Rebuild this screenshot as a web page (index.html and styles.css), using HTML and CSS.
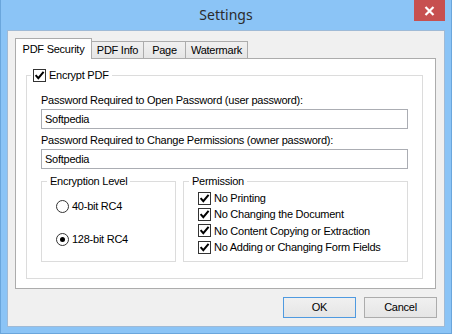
FILE: index.html
```html
<!DOCTYPE html>
<html>
<head>
<meta charset="utf-8">
<link rel="stylesheet" href="styles.css">
</head>
<body>
<div class="window">
  <div class="titlebar">
    <span class="title">Settings</span>
    <div class="close"><svg width="11" height="10" viewBox="0 0 11 10"><path d="M1.5 1 L9.5 9 M9.5 1 L1.5 9" stroke="#fff" stroke-width="2.2"/></svg></div>
  </div>
  <div class="client">
    <div class="tabs">
      <div class="tab active">PDF Security</div>
      <div class="tab t-info">PDF Info</div>
      <div class="tab t-page">Page</div>
      <div class="tab t-wm">Watermark</div>
    </div>
    <div class="panel">
      <div class="group main">
        <div class="gtitle"><span class="cb"><svg width="11" height="11" viewBox="0 0 11 11"><path d="M1.6 5.2 L4.3 8.2 L9.6 1.8" fill="none" stroke="#000" stroke-width="2"/></svg></span><span class="cbtext">Encrypt PDF</span></div>
        <div class="lbl l1">Password Required to Open Password (user password):</div>
        <div class="input">Softpedia</div>
        <div class="lbl l2">Password Required to Change Permissions (owner password):</div>
        <div class="input">Softpedia</div>
        <div class="subrow">
          <div class="group enc">
            <div class="gtitle plain">Encryption Level</div>
            <div class="radio r1"><span class="rb"></span><span>40-bit RC4</span></div>
            <div class="radio r2"><span class="rb on"><span class="dot"></span></span><span>128-bit RC4</span></div>
          </div>
          <div class="group perm">
            <div class="gtitle plain">Permission</div>
            <div class="chk first"><span class="cb"><svg width="11" height="11" viewBox="0 0 11 11"><path d="M1.6 5.2 L4.3 8.2 L9.6 1.8" fill="none" stroke="#000" stroke-width="2"/></svg></span><span>No Printing</span></div>
            <div class="chk"><span class="cb"><svg width="11" height="11" viewBox="0 0 11 11"><path d="M1.6 5.2 L4.3 8.2 L9.6 1.8" fill="none" stroke="#000" stroke-width="2"/></svg></span><span>No Changing the Document</span></div>
            <div class="chk"><span class="cb"><svg width="11" height="11" viewBox="0 0 11 11"><path d="M1.6 5.2 L4.3 8.2 L9.6 1.8" fill="none" stroke="#000" stroke-width="2"/></svg></span><span>No Content Copying or Extraction</span></div>
            <div class="chk"><span class="cb"><svg width="11" height="11" viewBox="0 0 11 11"><path d="M1.6 5.2 L4.3 8.2 L9.6 1.8" fill="none" stroke="#000" stroke-width="2"/></svg></span><span>No Adding or Changing Form Fields</span></div>
          </div>
        </div>
      </div>
    </div>
    <div class="buttons">
      <div class="btn default">OK</div>
      <div class="btn">Cancel</div>
    </div>
  </div>
</div>
</body>
</html>
```
FILE: styles.css
```css
* { box-sizing: border-box; margin: 0; padding: 0; }
html, body { width: 452px; height: 334px; overflow: hidden; }
body {
  font-family: "Liberation Sans", Arial, sans-serif;
  font-size: 11px;
  letter-spacing: -0.25px;
  color: #000;
}
.window {
  width: 452px;
  height: 334px;
  background: #8bc4f6;
  border: 1px solid #6aa6dc;
  border-top: none;
  display: flex;
  flex-direction: column;
}
.titlebar {
  height: 30px;
  display: grid;
  grid-template-columns: 1fr auto 1fr;
  align-items: start;
}
.title {
  grid-column: 2;
  font-family: "Noto Sans", sans-serif;
  font-size: 14px;
  letter-spacing: 0;
  line-height: 30px;
  color: #2b2b2b;
}
.close {
  grid-column: 3;
  justify-self: end;
  width: 31px;
  height: 21px;
  margin-right: 6px;
  background: #c75050;
  display: flex;
  align-items: center;
  justify-content: center;
}
.client {
  margin: 0 6px;
  height: 297px;
  background: #f0f0f0;
  border: 1px solid #9fbad6;
  padding: 7px 8px 0 7px;
  display: flex;
  flex-direction: column;
}
.tabs {
  display: flex;
  align-items: flex-end;
  height: 21px;
  margin-bottom: -1px;
}
.tab {
  height: 18px;
  border: 1px solid #acacac;
  border-bottom: none;
  border-left: none;
  background: linear-gradient(#f0f0f0, #e5e5e5);
  line-height: 17px;
  text-align: center;
}
.tab.active {
  position: relative;
  z-index: 2;
  height: 21px;
  width: 77px;
  background: #fff;
  border-left: 1px solid #acacac;
  line-height: 20px;
}
.t-info { width: 52px; }
.t-page { width: 42px; }
.t-wm { width: 62px; }
.panel {
  position: relative;
  z-index: 1;
  height: 231px;
  background: #fff;
  border: 1px solid #acacac;
  padding: 16px 12px 0 10px;
}
.group {
  border: 1px solid #dcdcdc;
  display: flex;
  flex-direction: column;
}
.main {
  height: 204px;
  padding: 0 14px;
}
.gtitle {
  margin-top: -8px;
  height: 15px;
  align-self: flex-start;
  background: #fff;
  display: flex;
  align-items: center;
  padding: 0 3px 0 2px;
  margin-left: -10px;
  line-height: 15px;
}
.gtitle.plain { margin-left: 5px; padding: 0 3px; }
.cb {
  width: 13px;
  height: 13px;
  border: 1px solid #333;
  background: #fff;
  display: flex;
  align-items: center;
  justify-content: center;
  flex: none;
}
.cbtext { margin-left: 3px; }
.lbl { line-height: 14px; }
.l1 { margin-top: 10px; }
.l2 { margin-top: 4px; }
.input {
  margin-top: 2px;
  height: 20px;
  border: 1px solid #abadb3;
  padding-left: 3px;
  line-height: 18px;
}
.subrow {
  display: flex;
  gap: 7px;
  margin-top: 12px;
}
.enc { width: 135px; height: 81px; }
.perm { width: 225px; height: 81px; }
.radio {
  display: flex;
  align-items: center;
  gap: 3px;
  height: 14px;
  padding-left: 14px;
}
.r1 { margin-top: 10px; }
.r2 { margin-top: 19px; }
.rb {
  width: 13px;
  height: 13px;
  border: 1px solid #333;
  border-radius: 50%;
  background: #fff;
  display: flex;
  align-items: center;
  justify-content: center;
}
.dot { width: 5px; height: 5px; border-radius: 50%; background: #000; }
.chk {
  display: flex;
  align-items: center;
  gap: 3px;
  height: 16.33px;
  padding-left: 14px;
}
.chk.first { margin-top: 1px; }
.buttons {
  display: flex;
  justify-content: flex-end;
  gap: 8px;
  margin-top: 8px;
  margin-right: -1px;
}
.btn {
  width: 73px;
  height: 21px;
  border: 1px solid #acacac;
  background: linear-gradient(#f0f0f0, #e5e5e5);
  text-align: center;
  line-height: 19px;
}
.btn.default { border-color: #4f9ae0; }
```
